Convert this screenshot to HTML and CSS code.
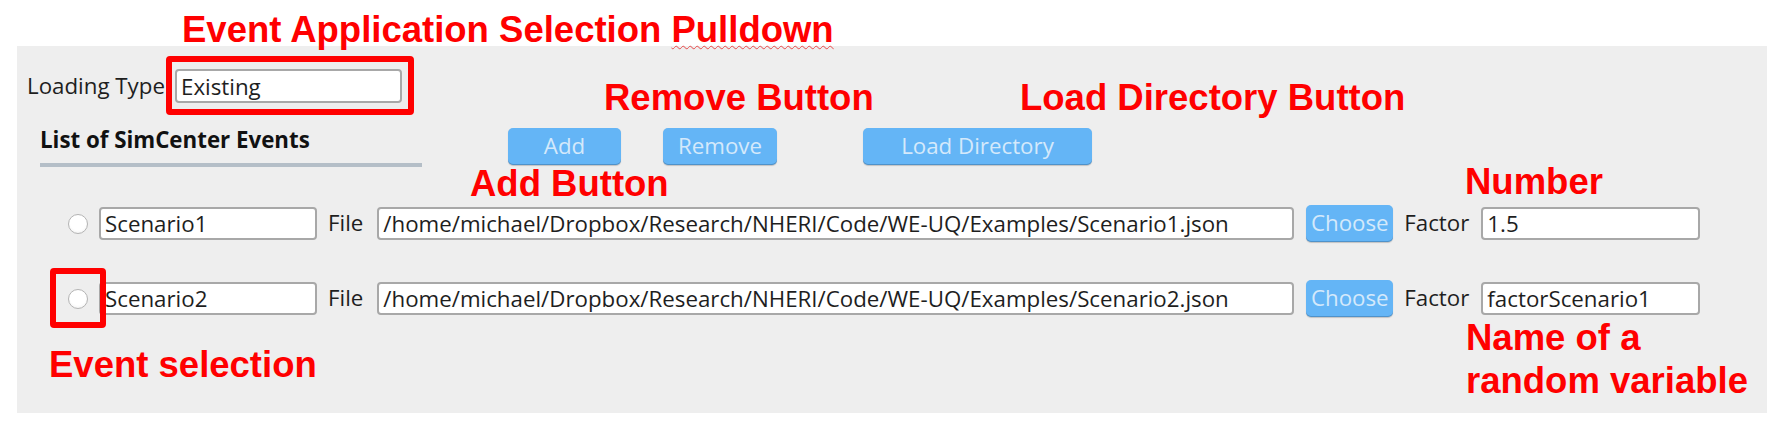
FILE: index.html
```html
<!DOCTYPE html>
<html lang="en">
<head>
<meta charset="utf-8">
<title>Event Selection</title>
<link rel="stylesheet" href="styles.css">
</head>
<body>
<div class="page">
  <div class="panel">
    <div class="loading-row">
      <span class="label loading-label">Loading Type</span>
      <div class="combo">Existing</div>
    </div>
    <div class="tools-row">
      <div class="section-head">
        <div class="section-title">List of SimCenter Events</div>
        <div class="section-rule"></div>
      </div>
      <button class="btn btn-add">Add</button>
      <button class="btn btn-remove">Remove</button>
      <button class="btn btn-load">Load Directory</button>
    </div>
    <div class="events">
      <div class="event-row">
        <span class="radio"></span>
        <div class="field field-name">Scenario1</div>
        <span class="label label-file">File</span>
        <div class="field field-path">/home/michael/Dropbox/Research/NHERI/Code/WE-UQ/Examples/Scenario1.json</div>
        <button class="btn btn-choose">Choose</button>
        <span class="label label-factor">Factor</span>
        <div class="field field-factor">1.5</div>
      </div>
      <div class="event-row">
        <span class="radio"></span>
        <div class="field field-name">Scenario2</div>
        <span class="label label-file">File</span>
        <div class="field field-path">/home/michael/Dropbox/Research/NHERI/Code/WE-UQ/Examples/Scenario2.json</div>
        <button class="btn btn-choose">Choose</button>
        <span class="label label-factor">Factor</span>
        <div class="field field-factor">factorScenario1</div>
      </div>
    </div>
  </div>

  <div class="mark mark-combo"></div>
  <div class="mark mark-radio"></div>

  <div class="note note-pulldown">Event Application Selection <span class="squiggle">Pulldown</span></div>
  <div class="note note-remove">Remove Button</div>
  <div class="note note-load">Load Directory Button</div>
  <div class="note note-add">Add Button</div>
  <div class="note note-number">Number</div>
  <div class="note note-random">Name of a<br>random variable</div>
  <div class="note note-event">Event selection</div>
</div>
</body>
</html>
```

FILE: styles.css
```css
* { box-sizing: border-box; }

html, body {
  margin: 0;
  padding: 0;
  background: #ffffff;
}

.page {
  position: relative;
  width: 1782px;
  height: 425px;
  padding: 46px 0 0 17px;
  font-family: "Open Sans", "Noto Sans", sans-serif;
  font-size: 22.3px;
  color: #1e1e1e;
}

.panel {
  width: 1750px;
  height: 367px;
  background: #eeeeee;
  padding-top: 23px;
}

.loading-row {
  display: flex;
  align-items: center;
  height: 34px;
  padding-left: 10px;
}

.loading-label {
  width: 148px;
  flex: 0 0 148px;
}

.label {
  white-space: nowrap;
  line-height: 1;
}

.combo,
.field {
  background: #ffffff;
  border: 2px solid #a8a8a8;
  border-radius: 4px;
  display: flex;
  align-items: center;
  padding-left: 4px;
  white-space: nowrap;
  overflow: hidden;
}

.combo {
  width: 227px;
  height: 34px;
}

.tools-row {
  display: flex;
  align-items: flex-start;
  margin-top: 25px;
  height: 39px;
}

.section-head {
  width: 382px;
  margin-left: 23px;
}

.section-title {
  font-weight: 700;
  font-size: 22.3px;
  line-height: 24px;
  color: #111111;
  white-space: nowrap;
}

.section-rule {
  height: 4px;
  margin-top: 11px;
  background: #b4bec7;
}

.btn {
  font-family: inherit;
  font-size: 22.3px;
  color: #d4e9fb;
  background: #64b5f6;
  border: none;
  border-radius: 5px;
  height: 37px;
  padding: 0;
  line-height: 1;
  box-shadow: inset 0 -1px 0 rgba(40, 80, 120, 0.35), 0 1px 1px rgba(0, 0, 0, 0.18);
}

.btn-add { width: 113px; margin-left: 86px; }
.btn-remove { width: 114px; margin-left: 42px; }
.btn-load { width: 229px; margin-left: 86px; }

.events {
  margin-top: 38px;
  display: flex;
  flex-direction: column;
  gap: 38px;
}

.event-row {
  display: flex;
  align-items: center;
  height: 37px;
}

.radio {
  width: 20px;
  height: 20px;
  margin-left: 51px;
  border-radius: 50%;
  border: 1px solid #b4b4b4;
  background: radial-gradient(circle at 50% 40%, #ffffff 55%, #ececec 100%);
  flex: 0 0 auto;
}

.field {
  height: 33px;
}

.field-name { width: 218px; margin-left: 11px; }
.label-file { margin-left: 11px; margin-right: 14px; }
.field-path { width: 917px; }
.btn-choose { width: 87px; margin-left: 12px; }
.label-factor { margin-left: 11px; margin-right: 12px; }
.field-factor { width: 219px; }

.mark {
  position: absolute;
  border: 6px solid #ff0000;
  border-radius: 4px;
}

.mark-combo { left: 166px; top: 56px; width: 248px; height: 59px; }
.mark-radio { left: 50px; top: 268px; width: 56px; height: 60px; }

.note {
  position: absolute;
  font-family: "Liberation Sans", Arial, sans-serif;
  font-weight: 700;
  font-size: 36.5px;
  line-height: 36px;
  color: #ff0000;
  white-space: nowrap;
}

.squiggle {
  text-decoration: underline wavy #e84a4a;
  text-decoration-thickness: 1px;
  text-underline-offset: 3px;
}

.note-pulldown { left: 182px; top: 12px; }
.note-remove { left: 604px; top: 80px; }
.note-load { left: 1020px; top: 80px; }
.note-add { left: 470px; top: 166px; }
.note-number { left: 1465px; top: 164px; }
.note-random { left: 1466px; top: 316px; line-height: 43px; }
.note-event { left: 49px; top: 347px; }
```
